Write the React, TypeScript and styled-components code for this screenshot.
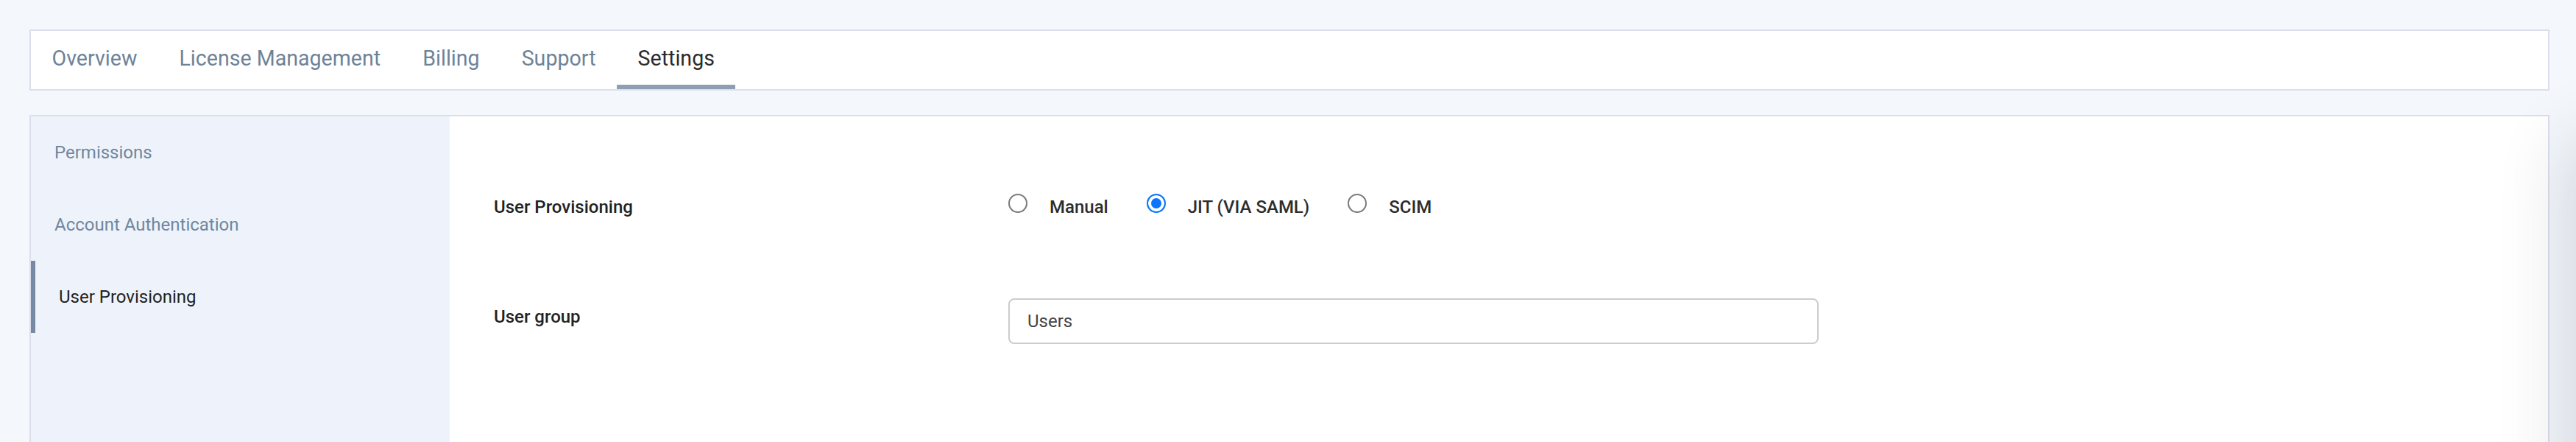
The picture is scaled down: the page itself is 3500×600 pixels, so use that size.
import React, { useState } from 'react';
import styled, { createGlobalStyle } from 'styled-components';

const GlobalStyle = createGlobalStyle`
	html, body {
		margin: 0;
		padding: 0;
		overflow: hidden;
		background: #f4f8fc;
		font-family: Roboto, 'Liberation Sans', sans-serif;
	}
	* {
		box-sizing: border-box;
	}
`;

const tabs = ['Overview', 'License Management', 'Billing', 'Support', 'Settings'];
const sections = ['Permissions', 'Account Authentication', 'User Provisioning'];
const provisioningOptions = ['Manual', 'JIT (VIA SAML)', 'SCIM'];

const App: React.FC = () => {
	const [activeTab, setActiveTab] = useState('Settings');
	const [activeSection, setActiveSection] = useState('User Provisioning');
	const [provisioning, setProvisioning] = useState('JIT (VIA SAML)');
	const [userGroup, setUserGroup] = useState('Users');

	return (
		<Page>
			<GlobalStyle />
			<TabBar>
				{tabs.map((tab) => (
					<Tab key={tab} $active={tab === activeTab} onClick={() => setActiveTab(tab)}>
						{tab}
					</Tab>
				))}
			</TabBar>

			<Panel>
				<Sidebar>
					{sections.map((section) => (
						<NavItem
							key={section}
							$active={section === activeSection}
							onClick={() => setActiveSection(section)}
						>
							{section}
						</NavItem>
					))}
				</Sidebar>

				<Content>
					<FormRow>
						<FieldLabel>User Provisioning</FieldLabel>
						<RadioGroup>
							{provisioningOptions.map((option) => (
								<RadioOption key={option}>
									<Radio
										type="radio"
										name="provisioning"
										checked={provisioning === option}
										onChange={() => setProvisioning(option)}
									/>
									{option}
								</RadioOption>
							))}
						</RadioGroup>
					</FormRow>
					<FormRow $top>
						<FieldLabel $offset>User group</FieldLabel>
						<TextInput value={userGroup} onChange={(e) => setUserGroup(e.target.value)} />
					</FormRow>
				</Content>
			</Panel>

			<DrawerEdge />
		</Page>
	);
};

const Page = styled.div`
	padding: 40px 36px 0 40px;
	min-height: 100vh;
`;

const TabBar = styled.nav`
	display: flex;
	height: 83px;
	background: #fff;
	border: 2px solid #dcdfeb;
`;

const Tab = styled.button<{ $active?: boolean }>`
	display: flex;
	align-items: center;
	height: 100%;
	padding: 0 28.5px;
	margin: 0;
	border: none;
	border-bottom: 6px solid ${(p) => (p.$active ? '#8e9fb3' : 'transparent')};
	background: none;
	font-family: inherit;
	font-size: 28.6px;
	color: ${(p) => (p.$active ? '#2b2b2b' : '#6e8398')};
	cursor: pointer;
`;

const Panel = styled.section`
	display: flex;
	margin-top: 33px;
	min-height: 600px;
	background: #fff;
	border: 2px solid #dcdfeb;
`;

const Sidebar = styled.aside`
	width: 569px;
	flex-shrink: 0;
	background: #eef3fb;
`;

const NavItem = styled.div<{ $active?: boolean }>`
	display: flex;
	align-items: center;
	height: 98px;
	padding-left: 32px;
	border-left: ${(p) => (p.$active ? '6px solid #768ba3' : 'none')};
	font-size: 24px;
	color: ${(p) => (p.$active ? '#222' : '#6f879e')};
	cursor: pointer;
`;

const Content = styled.div`
	flex: 1;
	padding: 90px 60px 0;
`;

const FormRow = styled.div<{ $top?: boolean }>`
	display: grid;
	grid-template-columns: 699px 1fr;
	align-items: ${(p) => (p.$top ? 'start' : 'center')};
	min-height: 66px;
	margin-top: ${(p) => (p.$top ? '91px' : '0')};
`;

const FieldLabel = styled.label<{ $offset?: boolean }>`
	margin-top: ${(p) => (p.$offset ? '11px' : '0')};
	font-size: 24px;
	font-weight: 500;
	color: #222;
`;

const RadioGroup = styled.div`
	display: flex;
	align-items: center;
	gap: 52px;
`;

const RadioOption = styled.label`
	display: flex;
	align-items: center;
	gap: 30px;
	font-size: 24px;
	font-weight: 500;
	color: #2d2d2d;
	cursor: pointer;
`;

const Radio = styled.input`
	appearance: none;
	width: 26px;
	height: 26px;
	margin: 0 0 10px;
	border: 2px solid #7a7a7a;
	border-radius: 50%;
	background: #fff;
	cursor: pointer;

	&:checked {
		border-color: #0b75ff;
		background: #0b75ff;
		box-shadow: inset 0 0 0 4px #fff;
	}
`;

const TextInput = styled.input`
	width: 1101px;
	height: 62px;
	padding: 0 24px;
	border: 2px solid #cccccc;
	border-radius: 8px;
	font-family: inherit;
	font-size: 24px;
	color: #444;
	outline: none;
`;

const DrawerEdge = styled.div`
	position: fixed;
	top: 200px;
	left: 100%;
	width: 400px;
	height: 1200px;
	box-shadow: 0 0 90px 10px rgba(30, 40, 60, 0.16);
`;

export default App;
